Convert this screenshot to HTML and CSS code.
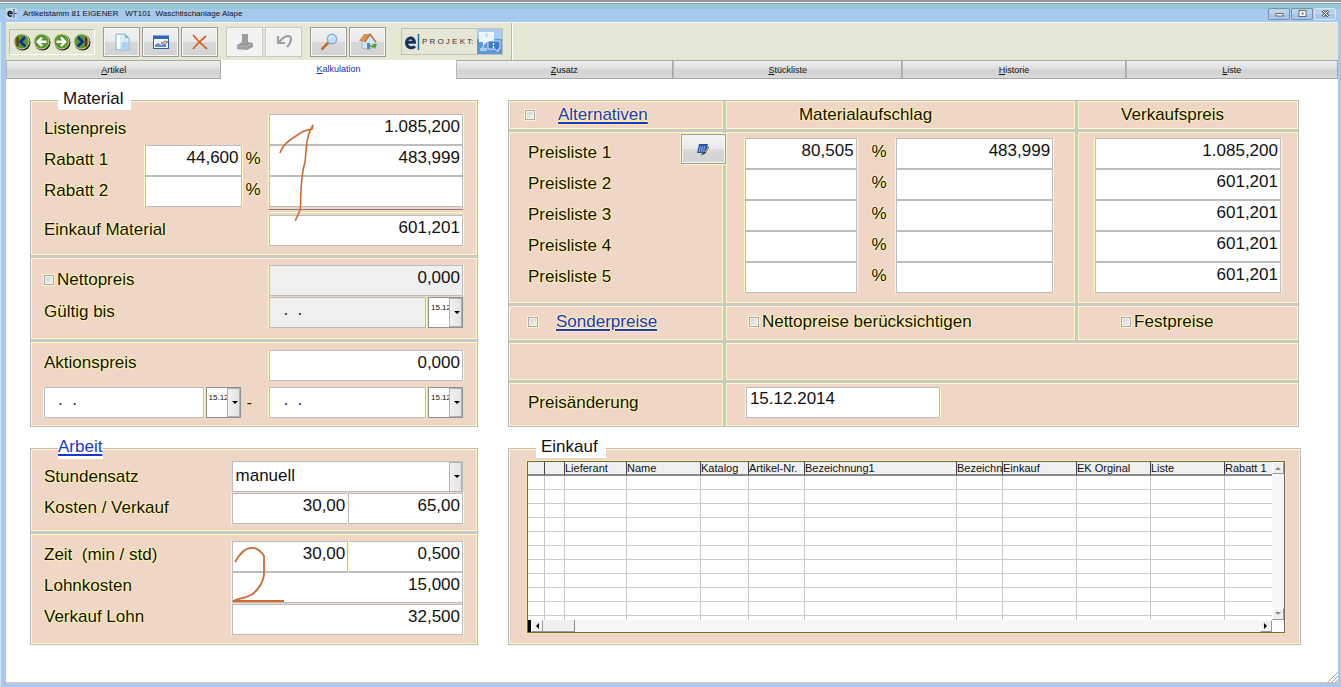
FILE: index.html
```html
<!DOCTYPE html>
<html lang="de">
<head>
<meta charset="utf-8">
<title>Artikelstamm 81 EIGENER</title>
<link rel="stylesheet" href="styles.css">
</head>
<body>
<div class="window">
  <header class="titlebar">
    <svg class="app-icon" viewBox="0 0 11 11"><rect width="11" height="11" fill="#c9d6e6"/><path d="M2 5.500h4C6 3 2 2.600 2 5.500c0 3 3 3 4 2" fill="none" stroke="#123" stroke-width="1.500"/><path d="M8 1v9M8 5.500h3" stroke="#2b5f9e"/></svg>
    <h1 class="title">Artikelstamm 81 EIGENER   WT101  Waschtischanlage Alape</h1>
    <div class="controls">
      <button class="control" aria-label="Minimieren"><svg viewBox="0 0 9 7"><rect x="1" y="3.500" width="7" height="2.500" fill="#fff" stroke="#667"/></svg></button>
      <button class="control" aria-label="Maximieren"><svg viewBox="0 0 9 7"><rect x="1" y=".5" width="7" height="6" fill="#fff" stroke="#667"/><rect x="3.500" y="2.500" width="2" height="2" fill="#667"/></svg></button>
      <button class="control control-close" aria-label="Schließen"><svg viewBox="0 0 9 7"><path d="M1.500.5l6 6M7.500.5l-6 6" stroke="#667" stroke-width="3"/><path d="M1.500.5l6 6M7.500.5l-6 6" stroke="#fff"/></svg></button>
    </div>
  </header>

  <nav class="toolbar" aria-label="Werkzeuge">
    <div class="record-nav">
      <button class="round" aria-label="Erster"><svg viewBox="0 0 18 18"><circle cx="9.500" cy="9.500" r="8" fill="#26321b"/><circle cx="8.500" cy="8.500" r="7.500" fill="#5c962f" stroke="#c9d8a8"/><path d="M4.500 4v9.500" stroke="#7a2418" stroke-width="2"/><path d="M12 4 7.500 8.800l5 4.700" fill="none" stroke="#0b2d9a" stroke-width="2.600"/></svg></button>
      <button class="round" aria-label="Zurück"><svg viewBox="0 0 18 18"><circle cx="9.500" cy="9.500" r="8" fill="#26321b"/><circle cx="8.500" cy="8.500" r="7.500" fill="#5c962f" stroke="#c9d8a8"/><path d="M13.500 8.700H5M9 4.500 4.700 8.700 9 13" fill="none" stroke="#fff" stroke-width="2.400"/></svg></button>
      <button class="round" aria-label="Weiter"><svg viewBox="0 0 18 18"><circle cx="9.500" cy="9.500" r="8" fill="#26321b"/><circle cx="8.500" cy="8.500" r="7.500" fill="#5c962f" stroke="#c9d8a8"/><path d="M3.500 8.700H12M8 4.500l4.300 4.200L8 13" fill="none" stroke="#fff" stroke-width="2.400"/></svg></button>
      <button class="round" aria-label="Letzter"><svg viewBox="0 0 18 18"><circle cx="9.500" cy="9.500" r="8" fill="#26321b"/><circle cx="8.500" cy="8.500" r="7.500" fill="#5c962f" stroke="#c9d8a8"/><path d="M13 4v9.500" stroke="#7a2418" stroke-width="2"/><path d="m5 4 4.500 4.800-5 4.700" fill="none" stroke="#0b2d9a" stroke-width="2.600"/></svg></button>
    </div>
    <div class="tool-group">
      <button class="tool" aria-label="Neu"><svg viewBox="0 0 18 18"><path d="M3 1h9l4 4v12H3z" fill="#d7ecf8" stroke="#8eb6cf"/><path d="M12 1v4h4z" fill="#7fb4d8"/><path d="M4 2h3v14H4z" fill="#fff"/><path d="M9 9h6v7H8z" fill="#a9d4ee"/></svg></button>
      <button class="tool" aria-label="Bearbeiten"><svg viewBox="0 0 18 18"><rect x="1.500" y="3" width="15" height="12.500" fill="#f2f2f2" stroke="#2e5ea3"/><path d="M1 3h16v3H1z" fill="#2f66c0"/><path d="M3 12l3-2 3 2 5-1v3H3z" fill="#5590cc"/><path d="M9 10l5-2 2 1-4 3z" fill="#e9c49a" stroke="#345" stroke-width=".6"/></svg></button>
      <button class="tool" aria-label="Löschen"><svg viewBox="0 0 18 18"><path d="M2 2c4 5 8 9 14 14M15 3C10 7 6 11 2 16" fill="none" stroke="#d4612b" stroke-width="1.700"/></svg></button>
    </div>
    <div class="tool-group">
      <button class="tool" disabled aria-label="Speichern"><svg viewBox="0 0 18 18"><path d="M6 1h6v8l5 1v4l-6 3-10-1v-4l5-3z" fill="#9c9c9c"/><path d="M2 13l9 1 5-3" fill="none" stroke="#b8b8b8"/></svg></button>
      <button class="tool" disabled aria-label="Rückgängig"><svg viewBox="0 0 18 18"><path d="M3 3v7h7M3 10 7 6c4-4 9-4 9 0 0 3-1 5-4 8" fill="none" stroke="#a0a0a0" stroke-width="2.200"/></svg></button>
    </div>
    <div class="tool-group">
      <button class="tool" aria-label="Suchen"><svg viewBox="0 0 18 18"><path d="m1.500 16.500 7-7" stroke="#c46a2c" stroke-width="2.600"/><circle cx="12" cy="6" r="4.700" fill="#bfe0fa" stroke="#8aa9d0" stroke-width="1.400"/><path d="M9.500 6c0-2 1-3 3-3" fill="none" stroke="#fff"/></svg></button>
      <button class="tool" aria-label="Start"><svg viewBox="0 0 18 18"><path d="M3 8v7l7 2 6-4V8l-4-5z" fill="#cfe4f5" stroke="#8ba7c0" stroke-width=".7"/><path d="M0 8 5 1l6 0L6 9z" fill="#d99152"/><path d="m6 9 5-8 6 8" fill="none" stroke="#c07038" stroke-width="1.400"/><path d="M8 10h3v6H8z" fill="#5e84b4"/><path d="M10 11c1 4 3 4 5 3l1 2 2-5-5 0 1 1c-1 1-2 1-4-1z" fill="#4f9a2c"/></svg></button>
    </div>
    <div class="brand">
      <div class="brand-box">
        <svg class="brand-mark" viewBox="0 0 16 16"><path d="M3 8.300h7.500C10.500 2.500 2.500 2.800 2.500 8.500c0 6 6 6 8.500 3.800" fill="none" stroke="#12335f" stroke-width="3"/><path d="M14.500 0v16" stroke="#1d6fa0" stroke-width="1.500"/></svg>
        <span class="brand-name">P R O J E K T:</span>
        <svg class="brand-help" viewBox="0 0 25 25"><rect width="25" height="25" fill="#5e97d8"/><path d="M0 0h25v10H0z" fill="#a9ccf0"/><path d="M2 3h15v10h-7l-4 4v-4H2z" fill="#eef6fd"/><path d="M11 12h12v8h-2v3l-3-3h-7z" fill="#3c7ac4" stroke="#d4e6fa"/><path d="M8 5h2v2L9 8" stroke="#9cc3ea" fill="none"/><path d="M16.500 14v2M16.500 17v2" stroke="#fff" stroke-width="1.500"/><path d="M3 19h2v-2h2v2h3v3H3z" fill="#a9ccf0"/></svg>
      </div>
    </div>
  </nav>

  <div class="tabs" role="tablist">
    <button class="tab tab-artikel" role="tab"><span><u>A</u>rtikel</span></button>
    <button class="tab tab-kalkulation active" role="tab" aria-selected="true"><span><u>K</u>alkulation</span></button>
    <button class="tab tab-zusatz" role="tab"><span><u>Z</u>usatz</span></button>
    <button class="tab tab-stueckliste" role="tab"><span><u>S</u>tückliste</span></button>
    <button class="tab tab-historie" role="tab"><span><u>H</u>istorie</span></button>
    <button class="tab tab-liste" role="tab"><span><u>L</u>iste</span></button>
  </div>

  <main class="content">
    <section class="panel">
      <h2 class="legend">Material</h2>
      <div class="cell material">
        <label class="label" for="listenpreis">Listenpreis</label>
        <div class="total marked">
          <input class="field" id="listenpreis" value="1.085,200">
          <svg class="mark mark-one" viewBox="0 0 38 102"><path d="M2 31C4 25 8 21 12 18 18 14 22 11 26 9L34 7 35 3C31 10 29 16 28.500 24L27 40C24 50 24 58 23 66L22.500 84C22.500 92 18 94 17.500 99" fill="none" stroke="#cf6a33" stroke-width="1.600"/></svg>
        </div>
        <label class="label" for="rabatt1">Rabatt 1</label>
        <input class="field" id="rabatt1" value="44,600">
        <span class="percent">%</span>
        <input class="field" value="483,999" aria-label="Rabatt 1 Betrag">
        <label class="label" for="rabatt2">Rabatt 2</label>
        <input class="field" id="rabatt2">
        <span class="percent">%</span>
        <input class="field" aria-label="Rabatt 2 Betrag">
        <div class="sum-line"></div>
        <label class="label" for="einkauf-material">Einkauf Material</label>
        <input class="field total" id="einkauf-material" value="601,201">
      </div>
      <div class="cell netto">
        <label class="label check-label"><input type="checkbox" class="check">Nettopreis</label>
        <input class="field" value="0,000" disabled aria-label="Nettopreis Betrag">
        <label class="label" for="gueltig">Gültig bis</label>
        <div class="date">
          <input class="field date-field" id="gueltig" value=".  ." disabled>
          <span class="combo"><select class="date-select" aria-label="Datum wählen"><option>15.12</option></select></span>
        </div>
      </div>
      <div class="cell aktion">
        <label class="label" for="aktion">Aktionspreis</label>
        <input class="field aktion-value" id="aktion" value="0,000">
        <div class="date">
          <input class="field date-field" value=".  ." aria-label="Aktion von">
          <span class="combo"><select class="date-select" aria-label="Datum von wählen"><option>15.12</option></select></span>
        </div>
        <span class="dash">-</span>
        <div class="date">
          <input class="field date-field" value=".  ." aria-label="Aktion bis">
          <span class="combo"><select class="date-select" aria-label="Datum bis wählen"><option>15.12</option></select></span>
        </div>
      </div>
    </section>

    <section class="panel prices">
      <div class="cell head-cell"><input type="checkbox" class="check" aria-label="Alternativen"><a class="link" href="#alternativen">Alternativen</a></div>
      <div class="cell head-cell head-markup">Materialaufschlag</div>
      <div class="cell head-cell head-sale">Verkaufspreis</div>

      <div class="cell list-names">
        <label class="label" for="p1">Preisliste 1</label>
        <label class="label" for="p2">Preisliste 2</label>
        <label class="label" for="p3">Preisliste 3</label>
        <label class="label" for="p4">Preisliste 4</label>
        <label class="label" for="p5">Preisliste 5</label>
        <button class="calc" aria-label="Berechnen"><svg viewBox="0 0 12 11"><path d="M2 0h9L9 9H0z" fill="#2450a8"/><path d="M2.500 3h6M2 5h6M1.500 7h6" stroke="#cfe0ff" stroke-dasharray="1.500 .7"/><path d="m11.500 3-4 6-3 1.500" fill="none" stroke="#333" stroke-width="1.300"/><path d="m11 4-3 4" stroke="#e7c24a"/></svg></button>
      </div>
      <div class="cell list-markup">
        <input class="field" id="p1" value="80,505"><span class="percent">%</span><input class="field" value="483,999" aria-label="Aufschlag 1">
        <input class="field" id="p2"><span class="percent">%</span><input class="field" aria-label="Aufschlag 2">
        <input class="field" id="p3"><span class="percent">%</span><input class="field" aria-label="Aufschlag 3">
        <input class="field" id="p4"><span class="percent">%</span><input class="field" aria-label="Aufschlag 4">
        <input class="field" id="p5"><span class="percent">%</span><input class="field" aria-label="Aufschlag 5">
      </div>
      <div class="cell list-sale">
        <input class="field" value="1.085,200" aria-label="Verkaufspreis 1">
        <input class="field" value="601,201" aria-label="Verkaufspreis 2">
        <input class="field" value="601,201" aria-label="Verkaufspreis 3">
        <input class="field" value="601,201" aria-label="Verkaufspreis 4">
        <input class="field" value="601,201" aria-label="Verkaufspreis 5">
      </div>

      <div class="cell option-cell special"><input type="checkbox" class="check" aria-label="Sonderpreise"><a class="link" href="#sonderpreise">Sonderpreise</a></div>
      <div class="cell option-cell"><label class="label check-label"><input type="checkbox" class="check">Nettopreise berücksichtigen</label></div>
      <div class="cell option-cell fixed"><label class="label check-label"><input type="checkbox" class="check">Festpreise</label></div>

      <div class="cell blank"></div>
      <div class="cell blank wide"></div>

      <div class="cell change-name"><label class="label" for="aenderung">Preisänderung</label></div>
      <div class="cell change wide"><input class="field text-field" id="aenderung" value="15.12.2014"></div>
    </section>

    <section class="panel">
      <h2 class="legend legend-link"><a class="link" href="#arbeit">Arbeit</a></h2>
      <div class="cell work rate">
        <label class="label" for="satz">Stundensatz</label>
        <span class="combo full"><select class="rate-select" id="satz"><option>manuell</option></select></span>
        <label class="label" for="kosten">Kosten / Verkauf</label>
        <input class="field" id="kosten" value="30,00">
        <input class="field" value="65,00" aria-label="Verkauf">
      </div>
      <div class="cell work time">
        <label class="label" for="zeit">Zeit  (min / std)</label>
        <div class="marked">
          <input class="field" id="zeit" value="30,00">
          <svg class="mark mark-two" viewBox="0 0 54 58"><path d="M3 17C7 10 12 3 19 3 25 2 30 8 32 11V28C32 38 24 47 19 50 14 53 7 53 1 56H52" fill="none" stroke="#cf6a33" stroke-width="1.800"/></svg>
        </div>
        <input class="field" value="0,500" aria-label="Stunden">
        <label class="label" for="lohn">Lohnkosten</label>
        <input class="field full" id="lohn" value="15,000">
        <label class="label" for="vlohn">Verkauf Lohn</label>
        <input class="field full" id="vlohn" value="32,500">
      </div>
    </section>

    <section class="panel">
      <h2 class="legend">Einkauf</h2>
      <div class="cell purchase">
        <div class="grid-box">
          <div class="grid-view">
            <table class="grid">
              <colgroup><col class="c-mark"><col class="c-flag"><col class="c-supplier"><col class="c-price"><col class="c-catalog"><col class="c-number"><col class="c-text"><col class="c-text2"><col class="c-price"><col class="c-price"><col class="c-price"><col class="c-rabatt"></colgroup>
              <thead><tr><th></th><th></th><th>Lieferant</th><th>Name</th><th>Katalog</th><th>Artikel-Nr.</th><th>Bezeichnung1</th><th>Bezeichn</th><th>Einkauf</th><th>EK Orginal</th><th>Liste</th><th>Rabatt 1</th></tr></thead>
              <tbody>
                <tr><td></td><td></td><td></td><td></td><td></td><td></td><td></td><td></td><td></td><td></td><td></td><td></td></tr>
                <tr><td></td><td></td><td></td><td></td><td></td><td></td><td></td><td></td><td></td><td></td><td></td><td></td></tr>
                <tr><td></td><td></td><td></td><td></td><td></td><td></td><td></td><td></td><td></td><td></td><td></td><td></td></tr>
                <tr><td></td><td></td><td></td><td></td><td></td><td></td><td></td><td></td><td></td><td></td><td></td><td></td></tr>
                <tr><td></td><td></td><td></td><td></td><td></td><td></td><td></td><td></td><td></td><td></td><td></td><td></td></tr>
                <tr><td></td><td></td><td></td><td></td><td></td><td></td><td></td><td></td><td></td><td></td><td></td><td></td></tr>
                <tr><td></td><td></td><td></td><td></td><td></td><td></td><td></td><td></td><td></td><td></td><td></td><td></td></tr>
                <tr><td></td><td></td><td></td><td></td><td></td><td></td><td></td><td></td><td></td><td></td><td></td><td></td></tr>
                <tr><td></td><td></td><td></td><td></td><td></td><td></td><td></td><td></td><td></td><td></td><td></td><td></td></tr>
                <tr><td></td><td></td><td></td><td></td><td></td><td></td><td></td><td></td><td></td><td></td><td></td><td></td></tr>
                <tr class="last"><td></td><td></td><td></td><td></td><td></td><td></td><td></td><td></td><td></td><td></td><td></td><td></td></tr>
              </tbody>
            </table>
          </div>
          <div class="vscroll">
            <button class="scroll-button" aria-label="Nach oben"><svg viewBox="0 0 6 4"><path d="M0 4 3 1l3 3z" fill="#888"/></svg></button>
            <button class="scroll-button" aria-label="Nach unten"><svg viewBox="0 0 6 4"><path d="m0 0 3 3 3-3z" fill="#888"/></svg></button>
          </div>
          <div class="hscroll">
            <span class="splitter"></span>
            <button class="scroll-button" aria-label="Nach links"><svg viewBox="0 0 4 6"><path d="M4 0 1 3l3 3z"/></svg></button>
            <span class="thumb"></span>
            <button class="scroll-button end" aria-label="Nach rechts"><svg viewBox="0 0 4 6"><path d="m0 0 3 3-3 3z"/></svg></button>
          </div>
        </div>
      </div>
    </section>
  </main>
  <footer class="status"><svg class="grip" viewBox="0 0 11 11"><path d="M0 11 11 0M4 11l7-7M8 11l3-3" stroke="#a8a8a8"/></svg></footer>
</div>
</body>
</html>
```

FILE: styles.css
```css
* {
  box-sizing: border-box;
}

body {
  margin: 0;
  font-family: "Liberation Sans", Arial, sans-serif;
  font-size: 17px;
  line-height: 20px;
  color: #111;
}

button,
input,
select {
  margin: 0;
  padding: 0;
  border-radius: 0;
  font: inherit;
  color: inherit;
}

svg {
  display: block;
}

.window {
  display: flex;
  flex-direction: column;
  min-height: 100vh;
  padding: 0 3px 3px 5px;
  background: #a6c9f0;
  border-left: 1px solid #d4e6f4;
}

/* title bar */
.titlebar {
  display: flex;
  align-items: center;
  gap: 6px;
  height: 22px;
  margin: 0 -3px 0 -6px;
  padding: 5px 5px 0 6px;
  background: linear-gradient(#959595 0 2px, #eef4fa 2px 3px, #7fa2c4 3px 4px, #95c8cc 4px 9px, #a6c9f0 9px);
}

.app-icon {
  width: 11px;
  height: 11px;
}

.title {
  flex: 1;
  margin: 0;
  font-size: 8px;
  line-height: 10px;
  font-weight: 400;
  white-space: pre;
}

.controls {
  display: flex;
  gap: 1px;
}

.control {
  display: grid;
  place-items: center;
  width: 22px;
  height: 12px;
  background: linear-gradient(#b8d4ea 50%, #a6c6ec 50%);
  border: 1px solid #7c8ea6;
  border-radius: 2px;
}

.control-close {
  border-color: #d8e8f6;
}

.control svg {
  width: 9px;
  height: 7px;
}

/* toolbar */
.toolbar {
  display: flex;
  align-items: center;
  gap: 8px;
  height: 38px;
  padding: 0 3px;
  background: #e5e6d4;
  border-top: 1px solid #f6f6f0;
}

.record-nav {
  display: flex;
  align-items: center;
  justify-content: space-between;
  width: 86px;
  height: 26px;
  padding: 0 3px;
  border: 1px solid #bcbcb6;
  border-right-color: #fff;
  border-bottom-color: #fff;
}

.round {
  width: 18px;
  height: 18px;
  background: none;
  border: 0;
}

.tool-group {
  display: flex;
  gap: 2px;
}

.tool {
  display: grid;
  place-items: center;
  width: 37px;
  height: 30px;
  background: linear-gradient(#f3f3f3, #e8e8e8 50%, #d8d8d8 50%, #d2d2d2);
  border: 1px solid #9a9a9a;
  box-shadow: inset 0 0 0 1px #f6f6f6;
}

.tool:disabled {
  background: #f2f2f0;
  border-color: #c8c8c4;
}

.tool svg {
  width: 18px;
  height: 18px;
}

.brand {
  display: flex;
  align-items: center;
  height: 37px;
  padding: 0 8px 0 7px;
  border-right: 1px solid #b4b4ae;
  box-shadow: 1px 0 #fff;
}

.brand-box {
  display: flex;
  align-items: center;
  gap: 2px;
  padding-left: 2px;
  border: 1px solid #c0c0bc;
}

.brand-mark {
  width: 16px;
  height: 16px;
}

.brand-name {
  width: 53px;
  font-size: 8px;
  line-height: 12px;
  color: #333;
  white-space: nowrap;
}

.brand-help {
  width: 25px;
  height: 25px;
}

/* tabs */
.tabs {
  display: flex;
  height: 19px;
  background: #fff;
}

.tab {
  flex-basis: 0;
  background: linear-gradient(#f0f0f0, #dedede 45%, #d2d2d2 55%, #dadada);
  border: 1px solid #a8a8a8;
  border-left-color: #b8b8b8;
  font-size: 9px;
  line-height: 12px;
}

.tab.active {
  padding-bottom: 2px;
  background: #fff;
  border: 0;
  color: #1430b4;
}

.tab-artikel { flex-grow: 215; }
.tab-kalkulation { flex-grow: 236; }
.tab-zusatz { flex-grow: 217; }
.tab-stueckliste { flex-grow: 229; }
.tab-historie { flex-grow: 223; }
.tab-liste { flex-grow: 212; }

/* content */
.content {
  flex: 1;
  display: grid;
  grid-template-columns: minmax(0, 448fr) minmax(0, 793fr);
  align-content: start;
  gap: 21px 30px;
  padding: 21px 37px 16px 24px;
  background: #fff;
}

.panel {
  position: relative;
  display: grid;
  gap: 3px;
  border: 1px solid #bcbcbc;
  background: #c9c9c9;
}

.cell {
  background: #efd6c7;
  border: 1px solid #fff8c0;
  text-shadow: 1px 0 1px #fff3a8, -1px 0 1px #fff3a8, 0 1px 1px #fff3a8, 0 -1px 1px #fff3a8;
}

.legend {
  position: absolute;
  top: -12px;
  left: 27px;
  z-index: 1;
  margin: 0;
  padding: 0 8px 1px 5px;
  background: #fff;
  font-size: 17px;
  line-height: 20px;
  font-weight: 400;
}

.legend-link {
  padding: 0 1px 2px 0;
}

.link {
  color: #1a36cc;
  text-decoration: underline;
  text-decoration-thickness: 2px;
  text-underline-offset: 2px;
}

.label {
  align-self: center;
  padding-bottom: 2px;
  white-space: pre;
}

.check-label {
  display: flex;
  align-items: center;
  gap: 3px;
}

.percent {
  align-self: center;
  padding-bottom: 3px;
  padding-left: 4px;
}

.field {
  display: block;
  width: 100%;
  min-width: 0;
  height: 31px;
  padding: 0 2px 5px 3px;
  background: #fff;
  border: 1px solid #bdbdbd;
  box-shadow: 1px 0 #fff8c0, -1px 0 #fff8c0;
  text-align: right;
}

.field:disabled {
  background: #efefef;
  color: #111;
}

.check {
  appearance: none;
  width: 10px;
  height: 10px;
  background: linear-gradient(135deg, #cfcfcf, #f6f6f6);
  border: 1px solid #a8a8a8;
  box-shadow: inset 0 0 0 1px #f4f4f4, 0 0 0 1px #fff3c8;
}

.marked {
  position: relative;
}

.mark {
  position: absolute;
  z-index: 2;
  pointer-events: none;
}

.mark-one {
  top: 8px;
  left: 9px;
  width: 38px;
  height: 102px;
}

.mark-two {
  top: 4px;
  left: 0;
  width: 54px;
  height: 58px;
}

/* material panel */
.material {
  display: grid;
  grid-template-columns: 101fr 97fr 28fr 194fr;
  grid-template-rows: 31px 31px 31px 8px 31px;
  padding: 12px 13px 8px 12px;
}

.total {
  grid-column: 4;
}

.sum-line {
  grid-column: 4;
  align-self: center;
  height: 4px;
  border-top: 1px solid #8a8078;
  border-bottom: 1px solid #fff8c0;
}

.material .label {
  grid-column: 1;
}

.material .label[for="listenpreis"],
.material .label[for="einkauf-material"] {
  grid-column: 1 / 4;
}

.netto {
  display: grid;
  grid-template-columns: 226fr 194fr;
  gap: 1px 0;
  padding: 6px 13px 10px 12px;
}

.aktion {
  display: grid;
  grid-template-columns: 197fr 29fr 194fr;
  gap: 6px 0;
  padding: 7px 13px 7px 12px;
}

.aktion .label {
  grid-column: 1 / 3;
  padding-bottom: 5px;
}

.dash {
  align-self: center;
  padding-left: 6px;
}

.date {
  display: flex;
  gap: 2px;
}

.date-field {
  flex: 1;
  padding-left: 13px;
  text-align: left;
  color: #123;
}

/* drop-downs */
.combo {
  position: relative;
  display: block;
}

.combo::before {
  content: "";
  position: absolute;
  top: 1px;
  right: 1px;
  bottom: 1px;
  width: 11px;
  background: linear-gradient(90deg, #f2f2f2, #e2e2e2);
  border: 1px solid #b0b0b0;
  pointer-events: none;
}

.combo::after {
  content: "";
  position: absolute;
  top: 14px;
  right: 3px;
  border: 3px solid transparent;
  border-top-color: #000;
  border-bottom: 0;
  pointer-events: none;
}

.date-select {
  appearance: none;
  display: block;
  width: 35px;
  height: 31px;
  padding: 0 0 14px 2px;
  background: #fff;
  border: 1px solid #909090;
  font-size: 8px;
}

.rate-select {
  appearance: none;
  display: block;
  width: 100%;
  height: 31px;
  padding: 0 16px 1px 3px;
  background: #fff;
  border: 1px solid #bdbdbd;
}

/* work panel */
.work {
  display: grid;
  grid-template-columns: 188fr 117fr 115fr;
  padding: 6px 13px 8px 12px;
}

.rate {
  padding-top: 11px;
  padding-bottom: 6px;
}

.rate .label {
  padding-bottom: 0;
}

.time .label {
  padding-bottom: 4px;
}

.full {
  grid-column: 2 / 4;
}

/* price lists */
.prices {
  grid-template-columns: minmax(0, 215fr) minmax(0, 351fr) minmax(0, 221fr);
  grid-template-rows: 28px 171px 34px 37px auto;
  margin-right: 2px;
}

.head-cell,
.option-cell {
  display: flex;
  align-items: center;
}

.head-cell {
  gap: 23px;
  padding-left: 15px;
}

.head-markup {
  padding-left: 72px;
}

.head-sale {
  padding-left: 42px;
}

.list-names {
  position: relative;
  padding: 4px 0 0 18px;
}

.list-names .label {
  display: block;
  padding: 0;
  line-height: 31px;
}

.calc {
  position: absolute;
  z-index: 1;
  top: 1px;
  right: -4px;
  display: grid;
  place-items: center;
  width: 45px;
  height: 30px;
  background: linear-gradient(#f3f3f3, #e8e8e8 50%, #d8d8d8 50%, #d2d2d2);
  border: 1px solid #9a9a9a;
  box-shadow: inset 0 0 0 1px #f6f6f6, 0 0 0 1px #fff3c8;
}

.calc svg {
  width: 12px;
  height: 11px;
}

.list-markup {
  display: grid;
  grid-template-columns: 112fr 39fr 158fr;
  align-content: start;
  padding: 5px 21px 0 18px;
}

.list-markup .percent {
  padding-left: 15px;
}

.list-sale {
  padding: 5px 16px 0;
}

.option-cell {
  padding-bottom: 2px;
  padding-left: 22px;
}

.option-cell .label {
  padding-bottom: 0;
}

.special {
  gap: 18px;
  padding-left: 18px;
}

.fixed {
  padding-left: 42px;
}

.wide {
  grid-column: 2 / 4;
}

.change-name {
  padding: 9px 0 0 18px;
}

.change {
  padding: 3px 0 7px 19px;
}

.text-field {
  width: 36%;
  max-width: 194px;
  padding-bottom: 7px;
  text-align: left;
}

/* purchase grid */
.purchase {
  padding: 11px 14px 10px 17px;
}

.grid-box {
  display: grid;
  grid-template-columns: minmax(0, 1fr) 12px;
  grid-template-rows: 158px 12px;
  background: #fff;
  border: 1px solid #6e6a50;
  box-shadow: 0 0 0 1px #f0eda0;
  text-shadow: none;
}

.grid-view {
  overflow: hidden;
}

.grid {
  width: 100%;
  table-layout: fixed;
  border-collapse: separate;
  border-spacing: 0;
  font-size: 11px;
  line-height: 12px;
}

.grid th {
  height: 14px;
  padding: 0;
  overflow: hidden;
  background: #efefef;
  border-right: 1px solid #444;
  border-bottom: 2px solid #888;
  font-weight: 400;
  text-align: left;
  white-space: nowrap;
}

.grid td {
  height: 14px;
  padding: 0;
  border-right: 1px solid #c8c8c8;
  border-bottom: 1px solid #cecece;
}

.grid .last td {
  border-bottom: 0;
}

.c-mark { width: 17px; }
.c-flag { width: 20px; }
.c-supplier { width: 62px; }
.c-price { width: 74px; }
.c-catalog { width: 48px; }
.c-number { width: 56px; }
.c-text { width: 152px; }
.c-text2 { width: 46px; }
.c-rabatt { width: 49px; }

.vscroll {
  display: flex;
  flex-direction: column;
  justify-content: space-between;
  background: #f6f6f6;
}

.hscroll {
  display: flex;
  background: #f6f6f6;
}

.scroll-button {
  display: grid;
  place-items: center;
  width: 12px;
  height: 12px;
  background: #efefef;
  border: 1px solid #fff;
  border-right-color: #999;
  border-bottom-color: #999;
}

.scroll-button svg {
  width: 6px;
  height: 6px;
}

.splitter {
  width: 3px;
  background: #000;
}

.thumb {
  width: 32px;
  background: #efefef;
  border-right: 1px solid #888;
  border-bottom: 1px solid #999;
}

.end {
  margin-left: auto;
}

.status {
  display: flex;
  justify-content: flex-end;
  height: 12px;
  background: #fff;
  border-bottom: 2px solid #c4c8cc;
}

.grip {
  width: 11px;
  height: 11px;
}
```
